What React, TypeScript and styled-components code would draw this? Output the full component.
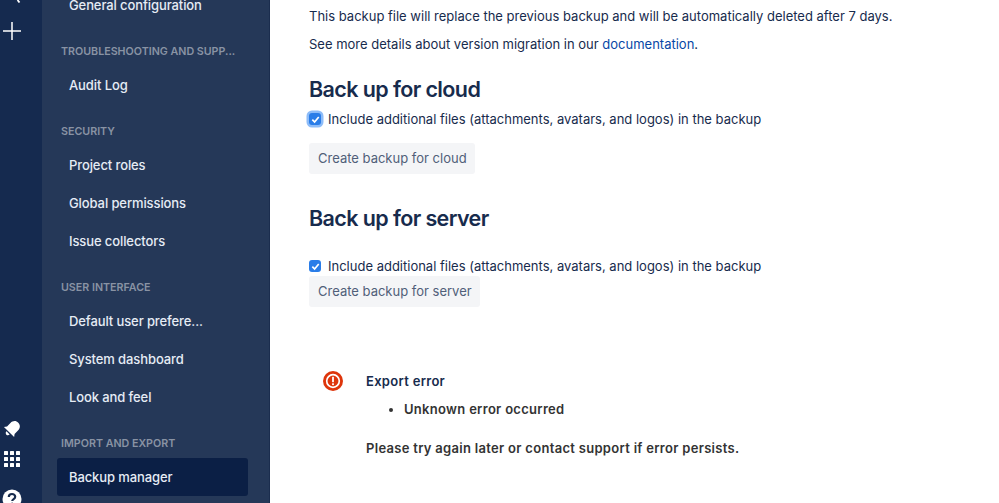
import React from 'react'
import styled, { createGlobalStyle } from 'styled-components'

const GlobalStyle = createGlobalStyle`
  html, body {
    margin: 0;
    height: 100%;
    overflow: hidden;
    background: #fff;
  }
  body {
    font-family: Inter, 'Noto Sans', 'Liberation Sans', sans-serif;
    font-size: 14px;
    color: #172b4d;
  }
`

const sections = [
  { title: 'TROUBLESHOOTING AND SUPP...', items: ['Audit Log'] },
  { title: 'SECURITY', items: ['Project roles', 'Global permissions', 'Issue collectors'] },
  { title: 'USER INTERFACE', items: ['Default user prefere...', 'System dashboard', 'Look and feel'] },
  { title: 'IMPORT AND EXPORT', items: ['Backup manager'] },
]

const LABEL = 'Include additional files (attachments, avatars, and logos) in the backup'

const Check = ({ focused }: { focused?: boolean }) => (
  <CheckBox $focused={focused}>
    <svg width="9" height="9" viewBox="0 0 10 10" fill="none">
      <path d="M1.5 5.2 L4 7.8 L8.6 2.2" stroke="#fff" strokeWidth="1.9" />
    </svg>
  </CheckBox>
)

export default function App() {
  return (
    <Page>
      <GlobalStyle />
      <GlobalNav>
        <TopIcons>
          <svg width="22" height="3" viewBox="0 0 22 3" fill="none">
            <path d="M16.500 0 L18.500 2.500" stroke="#fff" strokeWidth="1.800" />
          </svg>
          <svg width="18" height="18" viewBox="0 0 18 18" fill="none">
            <path d="M9 0v18M0 9h18" stroke="#fff" strokeWidth="1.500" />
          </svg>
        </TopIcons>
        <BottomIcons>
          <BellIcon width="20" height="20" viewBox="0 0 18 18" fill="#fff">
            <g transform="rotate(45 9 9)">
              <path d="M9 1c3 0 4.800 2.300 4.800 5.200v4.300l1.700 2.300H2.500l1.700-2.300V6.200C4.200 3.300 6 1 9 1z" />
              <path d="M7 14h4c0 1.300-.9 2.200-2 2.200S7 15.300 7 14z" />
            </g>
          </BellIcon>
          <GridIcon>
            {Array.from({ length: 9 }).map((_, i) => (
              <i key={i} />
            ))}
          </GridIcon>
          <svg width="20" height="20" viewBox="0 0 20 20">
            <circle cx="10" cy="10" r="9.500" fill="#fff" />
            <path d="M6.800 8c0-1.900 1.400-3 3.200-3s3.200 1.100 3.200 2.800c0 2.300-3 2.300-3 4.300" fill="none" stroke="#172b4d" strokeWidth="2.200" />
            <circle cx="10.100" cy="15" r="1.400" fill="#172b4d" />
          </svg>
        </BottomIcons>
      </GlobalNav>

      <Sidebar>
        <NavItem>General configuration</NavItem>
        {sections.map(section => (
          <Section key={section.title}>
            <SectionTitle>{section.title}</SectionTitle>
            {section.items.map(item => (
              <NavItem key={item} $active={item === 'Backup manager'}>
                {item}
              </NavItem>
            ))}
          </Section>
        ))}
      </Sidebar>

      <Main>
        <Paragraph>
          This backup file will replace the previous backup and will be automatically deleted after 7 days.
        </Paragraph>
        <Paragraph>
          See more details about version migration in our <DocLink>documentation</DocLink>.
        </Paragraph>

        <Heading>Back up for cloud</Heading>
        <CheckRow>
          <Check focused />
          {LABEL}
        </CheckRow>
        <Button>Create backup for cloud</Button>

        <Heading $gap={29}>Back up for server</Heading>
        <CheckRow $top={23}>
          <Check />
          {LABEL}
        </CheckRow>
        <Button $top={0}>Create backup for server</Button>

        <ErrorBlock>
          <ErrorIcon>
            <svg width="20" height="20" viewBox="0 0 20 20">
              <circle cx="10" cy="10" r="10" fill="#de350b" />
              <circle cx="10" cy="10" r="6.300" fill="none" stroke="#fff" strokeWidth="1.700" />
              <rect x="9.100" y="5.800" width="1.800" height="5.400" fill="#fff" />
              <rect x="9.100" y="12.300" width="1.800" height="1.800" fill="#fff" />
            </svg>
          </ErrorIcon>
          <ErrorBody>
            <ErrorTitle>Export error</ErrorTitle>
            <ErrorList>
              <li>Unknown error occurred</li>
            </ErrorList>
            <ErrorHint>Please try again later or contact support if error persists.</ErrorHint>
          </ErrorBody>
        </ErrorBlock>
      </Main>
    </Page>
  )
}

const Page = styled.div`
  display: flex;
  align-items: flex-start;
  width: 999px;
  height: 503px;
  overflow: hidden;
`

const GlobalNav = styled.nav`
  flex: 0 0 42px;
  display: flex;
  flex-direction: column;
  justify-content: space-between;
  align-items: center;
  height: 503px;
  background: #152a4f;
`

const TopIcons = styled.div`
  display: flex;
  flex-direction: column;
  align-items: center;
  gap: 19px;
  margin-left: -19px;
`

const BottomIcons = styled.div`
  display: flex;
  flex-direction: column;
  align-items: center;
  margin-left: -19px;
  margin-bottom: -6px;
`

const BellIcon = styled.svg`
  margin-bottom: 12px;
`

const GridIcon = styled.div`
  display: grid;
  grid-template-columns: repeat(3, 4px);
  grid-auto-rows: 4px;
  gap: 2px;
  margin-bottom: 22px;

  i {
    display: block;
    background: #fff;
    border-radius: 0.5px;
  }
`

const Sidebar = styled.aside`
  flex: 0 0 228px;
  box-sizing: border-box;
  height: 540px;
  margin-top: -14px;
  padding: 0 21px 0 15px;
  background: #253858;
  border-right: 1px solid #1b2d4e;
`

const Section = styled.section`
  padding-top: 17px;
`

const SectionTitle = styled.div`
  height: 20px;
  margin-bottom: 5px;
  padding: 1px 0 0 4px;
  box-sizing: border-box;
  font-size: 10.700px;
  line-height: 20px;
  font-weight: 600;
  color: #8993a4;
  white-space: nowrap;
`

const NavItem = styled.div<{ $active?: boolean }>`
  box-sizing: border-box;
  height: 38px;
  padding: 0 12px;
  border-radius: 3px;
  font-size: 13px;
  line-height: 38px;
  font-weight: 500;
  letter-spacing: -0.1px;
  color: #e6ecf5;
  white-space: nowrap;
  background: ${p => (p.$active ? '#0b1f45' : 'transparent')};
`

const Main = styled.main`
  flex: 1;
  min-width: 0;
  padding: 6px 0 0 39px;
`

const Paragraph = styled.p`
  margin: 0 0 8px;
  height: 20px;
  font-size: 13px;
  line-height: 20px;
  color: #172b4d;
  white-space: nowrap;
`

const DocLink = styled.a`
  color: #0747a6;
`

const Heading = styled.h2<{ $gap?: number }>`
  margin: ${p => p.$gap ?? 20}px 0 0;
  font-size: 21.500px;
  line-height: 30px;
  font-weight: 600;
  letter-spacing: -0.600px;
  color: #172b4d;
`

const CheckRow = styled.div<{ $top?: number }>`
  display: flex;
  align-items: center;
  gap: 7px;
  height: 20px;
  margin-top: ${p => p.$top ?? 5}px;
  font-size: 13px;
  line-height: 20px;
  white-space: nowrap;
`

const CheckBox = styled.span<{ $focused?: boolean }>`
  display: flex;
  align-items: center;
  justify-content: center;
  width: 12px;
  height: 12px;
  background: #2a7de8;
  border-radius: 3px;
  ${p => p.$focused && 'box-shadow: 0 0 0 2.500px #8dbcf8;'}
`

const Button = styled.div<{ $top?: number }>`
  display: block;
  width: fit-content;
  box-sizing: border-box;
  height: 31px;
  margin-top: ${p => p.$top ?? 14}px;
  padding: 0 8px 0 9px;
  background: #f4f5f7;
  border-radius: 3px;
  font-size: 13px;
  line-height: 31px;
  color: #505f79;
  white-space: nowrap;
`

const ErrorBlock = styled.div`
  display: flex;
  margin-top: 64px;
  padding-left: 14px;
`

const ErrorIcon = styled.div`
  flex: 0 0 43px;
  height: 20px;
`

const ErrorBody = styled.div`
  font-size: 13px;
  font-weight: 600;
  letter-spacing: 0.300px;
  line-height: 20px;
`

const ErrorTitle = styled.div`
  color: #172b4d;
`

const ErrorList = styled.ul`
  margin: 8px 0 0;
  padding-left: 38px;
  color: #333;
`

const ErrorHint = styled.div`
  margin-top: 19px;
  color: #333;
`
